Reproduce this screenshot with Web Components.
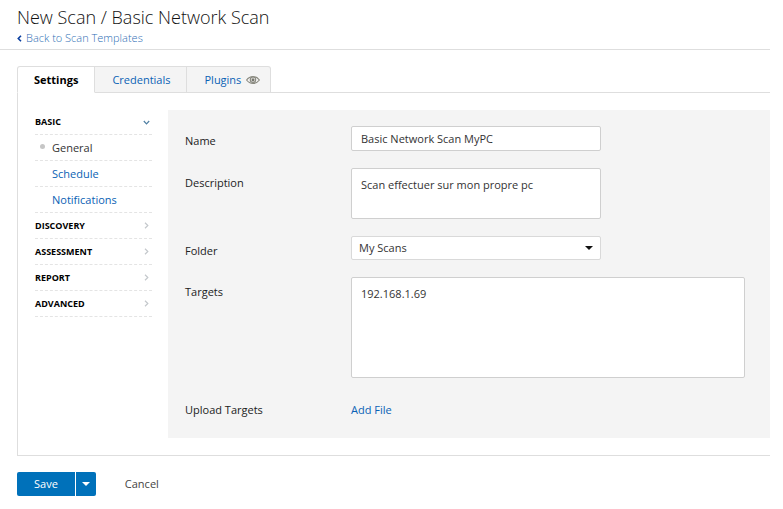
<!DOCTYPE html>
<html lang="en">
<head>
<meta charset="utf-8">
<title>New Scan / Basic Network Scan</title>
<style>
html { background: #fff; }
body { margin: 0; padding-right: 13px; font: 11px/16px "Open Sans", "Noto Sans", sans-serif; color: #222;
  --link: #0a62b4; --line: #dedede; --fill: #f4f4f4; --blue: #0071ba; }
</style>
</head>
<body>
<scan-page></scan-page>
<script>
const define = (name, html, setup) => customElements.define(name, class extends HTMLElement {
  constructor() {
    super();
    this.attachShadow({ mode: 'open' }).innerHTML = html;
  }
  connectedCallback() { if (setup) setup(this, this.shadowRoot); }
});

define('page-header', `
<style>
:host { display: block; border-bottom: 1px solid var(--line); padding: 5px 17px 2px; }
h1 { margin: 0; font-size: 18px; line-height: 24px; font-weight: 300; color: #111; }
a { display: flex; align-items: center; gap: 4px; line-height: 18px; font-weight: 300; color: #2f6fb5; text-decoration: none; }
svg { width: 5px; height: 7px; }
</style>
<h1><slot></slot></h1>
<a href="#templates"><svg viewBox="0 0 5 7" fill="none" stroke="#0a3fa0" stroke-width="1.6"><path d="M4 .8 1.3 3.5 4 6.2"/></svg><slot name="back"></slot></a>`);

define('tab-item', `
<style>
:host { display: block; }
button { font: inherit; line-height: 16px; height: 27px; padding: 0 16px 0 17px; border: 1px solid var(--line); border-left: 0; background: var(--fill);
  color: var(--link); display: flex; align-items: center; gap: 5px; cursor: pointer; }
:host([active]) button { background: #fff; color: #000; font-weight: 700; border-left: 1px solid var(--line); border-bottom-color: #fff; border-top-left-radius: 3px; padding: 0 16px; }
:host(:last-of-type) button { border-top-right-radius: 3px; padding-right: 10px; }
</style>
<button type="button"><slot></slot></button>`);

define('eye-icon', `
<style>:host { display: block; height: 8px; } svg { display: block; width: 14px; height: 8px; }</style>
<svg viewBox="0 0 14 8" fill="none" stroke="#8a8a80"><path d="M.6 4C2.400 1.600 4.500.6 7 .6S11.600 1.600 13.400 4C11.600 6.400 9.500 7.400 7 7.400S2.400 6.400 .6 4Z" stroke-width="1.200"/><circle cx="7" cy="3.700" r="2.700" stroke-width="1.200"/><circle cx="7" cy="3.700" r="1.500" fill="#77776e" stroke="none"/></svg>`);

define('tab-bar', `
<style>:host { display: flex; margin-bottom: -1px; position: relative; }</style>
<slot></slot>`);

define('nav-section', `
<style>
:host { display: block; }
button { all: unset; box-sizing: border-box; width: 100%; display: flex; align-items: center; justify-content: space-between;
  height: 26px; padding-right: 2px; border-bottom: 1px dashed #e4e4e4; font-size: 9px; font-weight: 700; color: #000; cursor: pointer; }
:host([open]) button { height: 25px; }
svg { width: 7px; height: 7px; }
path { fill: none; stroke: #c4c8cc; stroke-width: 1.200; }
:host([open]) path { stroke: #4f7fa3; }
:host([open]) svg { transform: rotate(90deg); }
</style>
<button type="button"><span></span><svg viewBox="0 0 7 7"><path d="M2 .8 4.800 3.500 2 6.200"/></svg></button>
<slot></slot>`, (el, root) => {
  root.querySelector('span').textContent = el.getAttribute('heading');
  root.querySelector('button').setAttribute('aria-expanded', el.hasAttribute('open'));
});

define('nav-link', `
<style>
:host { display: block; }
a { display: flex; align-items: center; height: 25px; border-bottom: 1px dashed #e4e4e4; color: var(--link); text-decoration: none; }
i { width: 5px; height: 5px; margin: 0 7px 2px 5px; border-radius: 50%; }
:host([current]) a { color: #333; }
:host([current]) i { background: #c6c6c6; }
</style>
<a href="#"><i></i><slot></slot></a>`);

define('form-field', `
<style>
:host { display: grid; grid-template-columns: 166px 1fr; }
label, .label { padding-top: 7px; color: #222; }
.control { display: grid; align-items: start; }
:host([narrow]) .control { max-width: 250px; }
input, textarea, select { font: inherit; color: #333; box-sizing: border-box; width: 100%; margin: 0; border: 1px solid #cfcfcf;
  border-radius: 2px; background: #fff; padding: 0 9px; outline: 0; grid-area: 1 / 1; }
input { height: 25px; }
select { appearance: none; height: 24px; padding: 0 7px; border-color: #d9d9d9; }
textarea { display: block; resize: none; padding: 8px 9px; height: 51px; }
:host([tall]) textarea { height: 101px; }
svg { grid-area: 1 / 1; place-self: center end; width: 8px; height: 4px; margin-right: 8px; pointer-events: none; }
a { color: var(--link); text-decoration: none; padding-top: 7px; justify-self: start; }
</style>
<div class="label"></div><div class="control"></div>`, (el, root) => {
  const kind = el.getAttribute('kind'), value = el.getAttribute('value');
  const box = root.querySelector('.control'), slot = root.querySelector('.label');
  const control = document.createElement(kind);
  if (kind === 'a') {
    control.href = '#upload';
    control.textContent = value;
    slot.textContent = el.getAttribute('label');
  } else {
    const label = document.createElement('label');
    label.htmlFor = control.id = 'control';
    label.textContent = el.getAttribute('label');
    slot.replaceWith(label);
    if (kind === 'select') control.add(new Option(value));
    else control.value = value;
    control.spellcheck = false;
  }
  box.append(control);
  if (kind === 'select') box.insertAdjacentHTML('beforeend', '<svg viewBox="0 0 8 4"><path d="M0 0h8L4 4z" fill="#111"/></svg>');
});

define('split-button', `
<style>
:host { display: flex; gap: 1px; }
button { font: inherit; font-weight: 500; height: 24px; border: 0; margin: 0; padding: 0 17px; background: var(--blue); color: #fff; border-radius: 2px 0 0 2px; cursor: pointer; }
.more { width: 20px; padding: 0; display: grid; place-items: center; border-radius: 0 2px 2px 0; }
svg { width: 8px; height: 4px; }
</style>
<button type="submit"><slot></slot></button><button class="more" type="button" aria-label="More save options"><svg viewBox="0 0 8 4"><path d="M0 0h8L4 4z" fill="#fff"/></svg></button>`);

define('scan-page', `
<style>
:host { display: block; }
main { padding: 16px 0 0 17px; }
.panel { display: grid; grid-template-columns: 117px 1fr; gap: 16px; border: 1px solid var(--line); border-right: 0; padding: 17px 0 17px 17px; }
form { display: grid; gap: 17px; align-content: start; background: var(--fill); padding: 16px 25px 20px 17px; }
footer { display: flex; gap: 29px; padding: 16px 0; align-items: center; }
.cancel { font: inherit; color: #444; border: 0; background: none; padding: 0; cursor: pointer; }
</style>
<page-header>New Scan / Basic Network Scan<span slot="back">Back to Scan Templates</span></page-header>
<main>
  <tab-bar>
    <tab-item active>Settings</tab-item><tab-item>Credentials</tab-item><tab-item>Plugins<eye-icon></eye-icon></tab-item>
  </tab-bar>
  <div class="panel">
    <nav>
      <nav-section heading="BASIC" open>
        <nav-link current>General</nav-link><nav-link>Schedule</nav-link><nav-link>Notifications</nav-link>
      </nav-section>
      <nav-section heading="DISCOVERY"></nav-section>
      <nav-section heading="ASSESSMENT"></nav-section>
      <nav-section heading="REPORT"></nav-section>
      <nav-section heading="ADVANCED"></nav-section>
    </nav>
    <form>
      <form-field narrow kind="input" label="Name" value="Basic Network Scan MyPC"></form-field>
      <form-field narrow kind="textarea" label="Description" value="Scan effectuer sur mon propre pc"></form-field>
      <form-field narrow kind="select" label="Folder" value="My Scans"></form-field>
      <form-field tall kind="textarea" label="Targets" value="192.168.1.69"></form-field>
      <form-field kind="a" label="Upload Targets" value="Add File"></form-field>
    </form>
  </div>
  <footer><split-button>Save</split-button><button class="cancel" type="button">Cancel</button></footer>
</main>`);
</script>
</body>
</html>
